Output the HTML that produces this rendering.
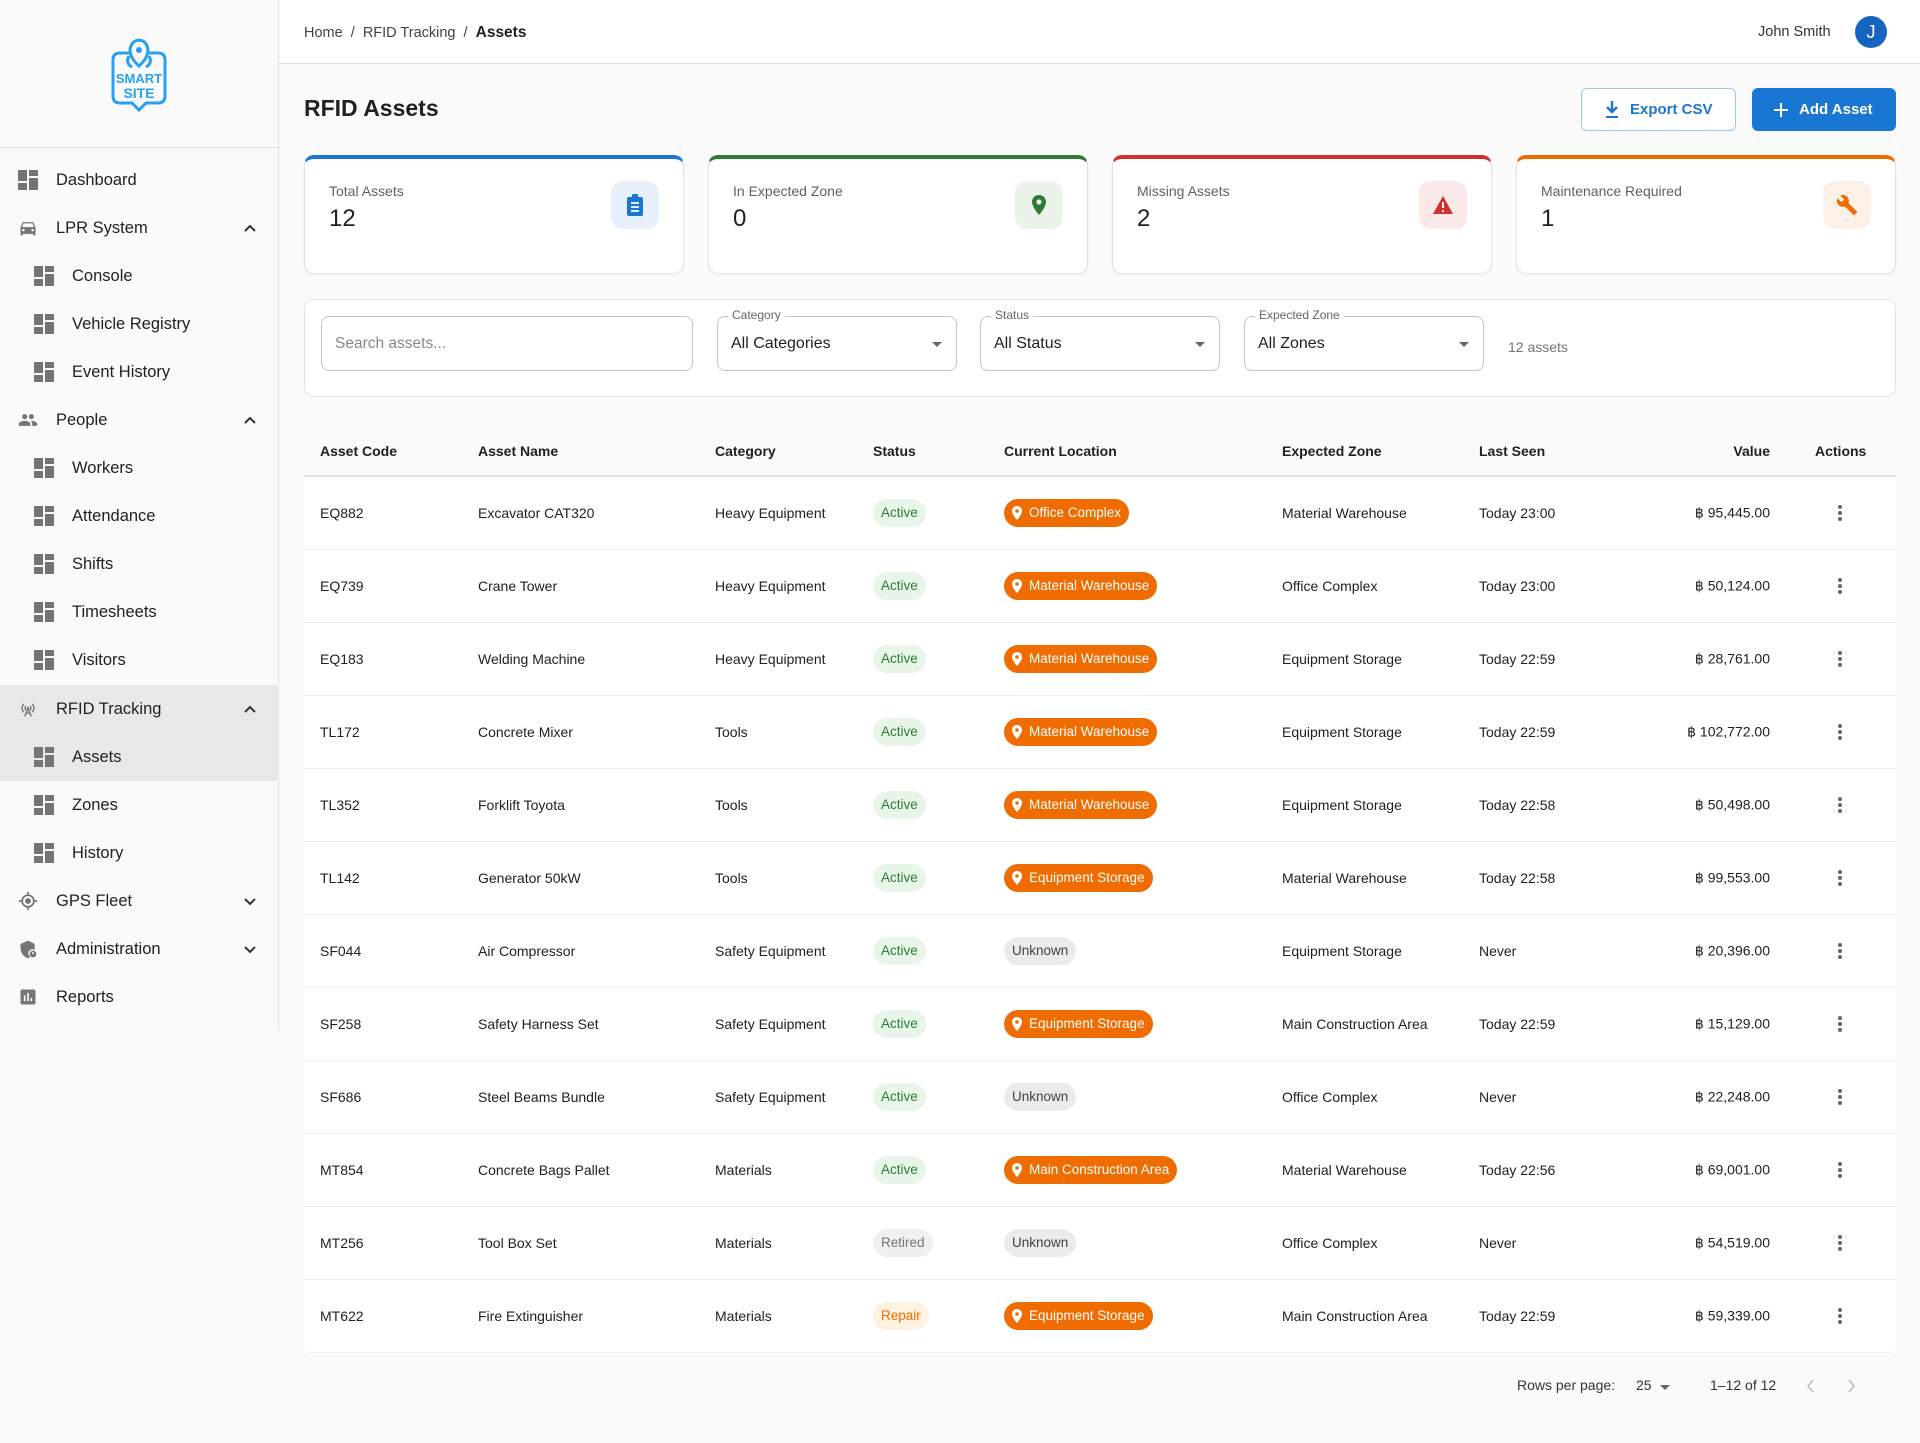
<!DOCTYPE html>
<html><head><meta charset="utf-8"><style>
*{box-sizing:border-box;margin:0;padding:0}
body{width:1920px;height:1443px;background:#fafafa;font-family:"Liberation Sans",Arial,sans-serif;color:#212121;position:relative;overflow:hidden}
.abs{position:absolute}
#side{left:0;top:0;width:279px;height:1030px;border-right:1px solid #e0e0e0;background:#fafafa}
.logoline{position:absolute;left:0;top:147px;width:279px;height:1px;background:#e0e0e0}
.nav{position:absolute;left:0;width:279px;height:48px;display:flex;align-items:center;font-size:16.5px;color:#212121}
.nav.sel{background:#e8e8e8}
.nav .ic{position:absolute;left:18px;top:14px;width:20px;height:20px}
.nav.sub .ic{left:34px}
.nav .t{position:absolute;left:56px}
.nav.sub .t{left:72px}
.nav .ch{position:absolute;left:243px;top:17px}
#top{left:279px;top:0;width:1641px;height:64px;background:#fff;border-bottom:1px solid #e0e0e0}
.card{position:absolute;top:155px;width:380px;height:119px;background:#fff;border-radius:10px;border:1px solid #e3e3e3;border-top:4px solid;box-shadow:0 1px 2px rgba(0,0,0,.05)}
.card .l{position:absolute;left:24px;top:24px;font-size:14px;color:#616161}
.card .v{position:absolute;left:24px;top:46px;font-size:24px;color:#212121}
.card .b{position:absolute;right:24px;top:22px;width:48px;height:48px;border-radius:12px;display:flex;align-items:center;justify-content:center}
.fl{position:absolute;top:316px;height:55px;border:1px solid #c4c4c4;border-radius:8px;background:#fff;font-size:16px}
.fl .lab{position:absolute;left:10px;top:-9px;font-size:12px;color:#666;background:#fff;padding:0 4px}
.fl .val{position:absolute;left:13px;top:18px}
.fl .ar{position:absolute;right:14px;top:25px;width:0;height:0;border-left:5px solid transparent;border-right:5px solid transparent;border-top:5px solid #666}
#tbl{left:304px;top:426px;width:1592px;height:929px;background:#fff;border-radius:10px;overflow:hidden}
.th{position:absolute;top:0;left:0;width:1592px;height:51px;background:#fafafa;border-bottom:2px solid #e0e0e0;font-size:14px;font-weight:bold}
.row{position:absolute;left:0;width:1592px;height:73px;border-bottom:1px solid #f0f0f0;font-size:14px}
.c{position:absolute;top:50%;transform:translateY(-50%);white-space:nowrap}
.chip{height:28px;line-height:28px;border-radius:14px;padding:0 8px;font-size:13.5px}
.act{background:#e8f5e9;color:#2e7d32}
.ret{background:#f0f0f0;color:#757575}
.rep{background:#fff3e0;color:#ef6c00}
.unk{background:#ebebeb;color:#424242}
.loc{background:#ef6c00;color:#fff;padding-left:25px;position:absolute}
.loc svg{position:absolute;left:8px;top:7px}
.dots{width:4px}
.dots i{display:block;width:4px;height:4px;border-radius:2px;background:#666;margin:2px 0}
</style></head><body>
<div id="side" class="abs">
 <svg class="abs" style="left:110px;top:36px" width="58" height="76" viewBox="0 0 58 76">
  <path d="M10 17 H19 M39 17 H48 Q55 17 55 24 V60 Q55 67 48 67 H36 L29 74 L22 67 H10 Q3 67 3 60 V24 Q3 17 10 17" fill="none" stroke="#29a0f0" stroke-width="3"/>
  <path d="M29 30 C20 22 18 14 22 8 C25 3 33 3 36 8 C40 14 38 22 29 30Z" fill="none" stroke="#29a0f0" stroke-width="3"/>
  <circle cx="29" cy="14" r="3" fill="#29a0f0"/>
  <path d="M19 20 Q15 27 22 31 M39 20 Q43 27 36 31" fill="none" stroke="#29a0f0" stroke-width="3"/>
  <text x="29" y="47" text-anchor="middle" font-family="Liberation Sans" font-weight="bold" font-size="13" fill="#29a0f0">SMART</text>
  <text x="29" y="62" text-anchor="middle" font-family="Liberation Sans" font-weight="bold" font-size="14" fill="#29a0f0">SITE</text>
 </svg>
 <div class="logoline"></div>
</div>

<div class="nav" style="top:156px"><svg class="ic" viewBox="0 0 20 20"><path fill="#757575" d="M0 0h9v11H0zM11 0h9v6h-9zM11 8h9v12h-9zM0 13h9v7H0z"/></svg><span class="t">Dashboard</span></div>
<div class="nav" style="top:204px"><svg class="ic" viewBox="0 0 24 24"><path fill="#757575" d="M18.9 6c-.2-.6-.8-1-1.4-1h-11c-.7 0-1.2.4-1.4 1L3 12v8c0 .6.4 1 1 1h1c.6 0 1-.4 1-1v-1h12v1c0 .6.4 1 1 1h1c.6 0 1-.4 1-1v-8zM6.5 16c-.8 0-1.5-.7-1.5-1.5S5.7 13 6.5 13s1.5.7 1.5 1.5S7.3 16 6.5 16m11 0c-.8 0-1.5-.7-1.5-1.5s.7-1.5 1.5-1.5 1.5.7 1.5 1.5-.7 1.5-1.5 1.5M5 11l1.5-4.5h11L19 11z"/></svg><span class="t">LPR System</span><svg class="ch" width="14" height="14" viewBox="0 0 14 14"><path d="M2 10 L7 5 L12 10" fill="none" stroke="#333" stroke-width="2"/></svg></div>
<div class="nav sub" style="top:252px"><svg class="ic" viewBox="0 0 20 20"><path fill="#757575" d="M0 0h9v11H0zM11 0h9v6h-9zM11 8h9v12h-9zM0 13h9v7H0z"/></svg><span class="t">Console</span></div>
<div class="nav sub" style="top:300px"><svg class="ic" viewBox="0 0 20 20"><path fill="#757575" d="M0 0h9v11H0zM11 0h9v6h-9zM11 8h9v12h-9zM0 13h9v7H0z"/></svg><span class="t">Vehicle Registry</span></div>
<div class="nav sub" style="top:348px"><svg class="ic" viewBox="0 0 20 20"><path fill="#757575" d="M0 0h9v11H0zM11 0h9v6h-9zM11 8h9v12h-9zM0 13h9v7H0z"/></svg><span class="t">Event History</span></div>
<div class="nav" style="top:396px"><svg class="ic" viewBox="0 0 24 24"><path fill="#757575" d="M16 11c1.7 0 3-1.3 3-3s-1.3-3-3-3-3 1.3-3 3 1.3 3 3 3m-8 0c1.7 0 3-1.3 3-3S9.7 5 8 5 5 6.3 5 8s1.3 3 3 3m0 2c-2.3 0-7 1.2-7 3.5V19h14v-2.5c0-2.3-4.7-3.5-7-3.5m8 0c-.3 0-.6 0-1 .1 1.2.8 2 2 2 3.4V19h6v-2.5c0-2.3-4.7-3.5-7-3.5"/></svg><span class="t">People</span><svg class="ch" width="14" height="14" viewBox="0 0 14 14"><path d="M2 10 L7 5 L12 10" fill="none" stroke="#333" stroke-width="2"/></svg></div>
<div class="nav sub" style="top:444px"><svg class="ic" viewBox="0 0 20 20"><path fill="#757575" d="M0 0h9v11H0zM11 0h9v6h-9zM11 8h9v12h-9zM0 13h9v7H0z"/></svg><span class="t">Workers</span></div>
<div class="nav sub" style="top:492px"><svg class="ic" viewBox="0 0 20 20"><path fill="#757575" d="M0 0h9v11H0zM11 0h9v6h-9zM11 8h9v12h-9zM0 13h9v7H0z"/></svg><span class="t">Attendance</span></div>
<div class="nav sub" style="top:540px"><svg class="ic" viewBox="0 0 20 20"><path fill="#757575" d="M0 0h9v11H0zM11 0h9v6h-9zM11 8h9v12h-9zM0 13h9v7H0z"/></svg><span class="t">Shifts</span></div>
<div class="nav sub" style="top:588px"><svg class="ic" viewBox="0 0 20 20"><path fill="#757575" d="M0 0h9v11H0zM11 0h9v6h-9zM11 8h9v12h-9zM0 13h9v7H0z"/></svg><span class="t">Timesheets</span></div>
<div class="nav sub" style="top:636px"><svg class="ic" viewBox="0 0 20 20"><path fill="#757575" d="M0 0h9v11H0zM11 0h9v6h-9zM11 8h9v12h-9zM0 13h9v7H0z"/></svg><span class="t">Visitors</span></div>
<div class="nav sel" style="top:685px"><svg class="ic" viewBox="0 0 24 24"><path fill="none" stroke="#757575" stroke-width="1.6" d="M7 6a7 7 0 0 0 0 10M17 6a7 7 0 0 1 0 10M9.5 8.5a3.5 3.5 0 0 0 0 5M14.5 8.5a3.5 3.5 0 0 1 0 5M12 11 L8 21 M12 11 L16 21 M9.5 17h5"/><circle cx="12" cy="11" r="1.5" fill="#757575"/></svg><span class="t">RFID Tracking</span><svg class="ch" width="14" height="14" viewBox="0 0 14 14"><path d="M2 10 L7 5 L12 10" fill="none" stroke="#333" stroke-width="2"/></svg></div>
<div class="nav sub sel" style="top:733px"><svg class="ic" viewBox="0 0 20 20"><path fill="#757575" d="M0 0h9v11H0zM11 0h9v6h-9zM11 8h9v12h-9zM0 13h9v7H0z"/></svg><span class="t">Assets</span></div>
<div class="nav sub" style="top:781px"><svg class="ic" viewBox="0 0 20 20"><path fill="#757575" d="M0 0h9v11H0zM11 0h9v6h-9zM11 8h9v12h-9zM0 13h9v7H0z"/></svg><span class="t">Zones</span></div>
<div class="nav sub" style="top:829px"><svg class="ic" viewBox="0 0 20 20"><path fill="#757575" d="M0 0h9v11H0zM11 0h9v6h-9zM11 8h9v12h-9zM0 13h9v7H0z"/></svg><span class="t">History</span></div>
<div class="nav" style="top:877px"><svg class="ic" viewBox="0 0 24 24"><circle cx="12" cy="12" r="7" fill="none" stroke="#757575" stroke-width="2"/><circle cx="12" cy="12" r="3.5" fill="#757575"/><path d="M12 1v4M12 19v4M1 12h4M19 12h4" stroke="#757575" stroke-width="2"/></svg><span class="t">GPS Fleet</span><svg class="ch" width="14" height="14" viewBox="0 0 14 14"><path d="M2 5 L7 10 L12 5" fill="none" stroke="#333" stroke-width="2"/></svg></div>
<div class="nav" style="top:925px"><svg class="ic" viewBox="0 0 24 24"><path fill="#757575" d="M12 2 L3 6v5c0 5.5 3.8 10.7 9 12 1-.3 2-.7 2.8-1.3A5 5 0 0 1 20 13V6z"/><circle cx="18" cy="18" r="4" fill="#757575"/><circle cx="18" cy="17" r="1.2" fill="#fff"/></svg><span class="t">Administration</span><svg class="ch" width="14" height="14" viewBox="0 0 14 14"><path d="M2 5 L7 10 L12 5" fill="none" stroke="#333" stroke-width="2"/></svg></div>
<div class="nav" style="top:973px"><svg class="ic" viewBox="0 0 24 24"><path fill="#757575" d="M19 3H5c-1.1 0-2 .9-2 2v14c0 1.1.9 2 2 2h14c1.1 0 2-.9 2-2V5c0-1.1-.9-2-2-2M9 17H7v-7h2zm4 0h-2V7h2zm4 0h-2v-4h2z"/></svg><span class="t">Reports</span></div>

<div id="top" class="abs">
 <div class="abs" style="left:25px;top:24px;font-size:14.5px;color:#424242">Home &nbsp;/&nbsp; RFID Tracking &nbsp;/&nbsp; <b style="color:#212121;font-size:15.5px">Assets</b></div>
 <div class="abs" style="left:1479px;top:24px;font-size:14.5px;color:#333">John Smith</div>
 <div class="abs" style="left:1576px;top:16px;width:32px;height:32px;border-radius:16px;background:#1565c0;color:#fff;text-align:center;line-height:32px;font-size:18px">J</div>
</div>

<div class="abs" style="left:304px;top:95px;font-size:23px;font-weight:bold">RFID Assets</div>
<div class="abs" style="left:1581px;top:88px;width:155px;height:43px;border:1px solid #90caf9;border-radius:6px;background:#fff;color:#1976d2;font-size:15px;font-weight:bold;line-height:41px;padding-left:48px">Export CSV
 <svg class="abs" style="left:22px;top:12px" width="16" height="18" viewBox="0 0 16 18"><path d="M8 0v10M3 6l5 5 5-5" fill="none" stroke="#1976d2" stroke-width="2.4"/><path d="M2 16h12" stroke="#1976d2" stroke-width="2"/></svg></div>
<div class="abs" style="left:1752px;top:88px;width:144px;height:43px;border-radius:6px;background:#1976d2;color:#fff;font-size:15px;font-weight:bold;line-height:43px;padding-left:47px">Add Asset
 <svg class="abs" style="left:22px;top:15px" width="14" height="14" viewBox="0 0 14 14"><path d="M7 0v14M0 7h14" stroke="#fff" stroke-width="2"/></svg></div>

<div class="card" style="left:304px;border-top-color:#1976d2"><div class="l">Total Assets</div><div class="v">12</div><div class="b" style="background:#e8f0fb"><svg width="16" height="22" viewBox="0 0 16 22"><rect x="0" y="3" width="16" height="19" rx="2" fill="#1976d2"/><rect x="5" y="0" width="6" height="5" rx="1" fill="#1976d2"/><path d="M4 9h8M4 13h8M4 17h8" stroke="#fff" stroke-width="1.8"/></svg></div></div>
<div class="card" style="left:708px;border-top-color:#2e7d32"><div class="l">In Expected Zone</div><div class="v">0</div><div class="b" style="background:#ebf3ea"><svg width="14" height="20" viewBox="0 0 14 20"><path d="M7 0C3 0 0 3 0 7c0 5 7 13 7 13s7-8 7-13c0-4-3-7-7-7z" fill="#2e7d32"/><circle cx="7" cy="7" r="2.5" fill="#fff"/></svg></div></div>
<div class="card" style="left:1112px;border-top-color:#d32f2f"><div class="l">Missing Assets</div><div class="v">2</div><div class="b" style="background:#fbe9e9"><svg width="20" height="18" viewBox="0 0 20 18"><path d="M10 0L20 18H0z" fill="#d32f2f"/><path d="M10 6v6M10 14v2" stroke="#fff" stroke-width="2"/></svg></div></div>
<div class="card" style="left:1516px;border-top-color:#ef6c00"><div class="l">Maintenance Required</div><div class="v">1</div><div class="b" style="background:#fdf0e6"><svg width="22" height="22" viewBox="0 0 24 24"><path fill="#ef6c00" d="M22.7 19l-9.1-9.1c.9-2.3.4-5-1.5-6.9-2-2-5-2.4-7.4-1.3L9 6 6 9 1.6 4.7C.4 7.1.9 10.1 2.9 12.1c1.9 1.9 4.6 2.4 6.9 1.5l9.1 9.1c.4.4 1 .4 1.4 0l2.3-2.3c.5-.4.5-1.1.1-1.4"/></svg></div></div>

<div class="abs" style="left:304px;top:299px;width:1592px;height:98px;background:#fff;border:1px solid #e3e3e3;border-radius:10px"></div>
<div class="fl" style="left:321px;width:372px"><span class="val" style="color:#888;font-size:15.5px">Search assets...</span></div>
<div class="fl" style="left:717px;width:240px"><span class="lab">Category</span><span class="val">All Categories</span><span class="ar"></span></div>
<div class="fl" style="left:980px;width:240px"><span class="lab">Status</span><span class="val">All Status</span><span class="ar"></span></div>
<div class="fl" style="left:1244px;width:240px"><span class="lab">Expected Zone</span><span class="val">All Zones</span><span class="ar"></span></div>
<div class="abs" style="left:1508px;top:339px;font-size:14px;color:#757575">12 assets</div>

<div id="tbl" class="abs">
 <div class="th">
  <span class="c" style="left:16px">Asset Code</span><span class="c" style="left:174px">Asset Name</span><span class="c" style="left:411px">Category</span><span class="c" style="left:569px">Status</span><span class="c" style="left:700px">Current Location</span><span class="c" style="left:978px">Expected Zone</span><span class="c" style="left:1175px">Last Seen</span><span class="c" style="right:126px">Value</span><span class="c" style="left:1511px">Actions</span>
 </div>
</div>
<script>
const rows=[
["EQ882","Excavator CAT320","Heavy Equipment","act","Active","Office Complex","Material Warehouse","Today 23:00","95,445.00"],
["EQ739","Crane Tower","Heavy Equipment","act","Active","Material Warehouse","Office Complex","Today 23:00","50,124.00"],
["EQ183","Welding Machine","Heavy Equipment","act","Active","Material Warehouse","Equipment Storage","Today 22:59","28,761.00"],
["TL172","Concrete Mixer","Tools","act","Active","Material Warehouse","Equipment Storage","Today 22:59","102,772.00"],
["TL352","Forklift Toyota","Tools","act","Active","Material Warehouse","Equipment Storage","Today 22:58","50,498.00"],
["TL142","Generator 50kW","Tools","act","Active","Equipment Storage","Material Warehouse","Today 22:58","99,553.00"],
["SF044","Air Compressor","Safety Equipment","act","Active","","Equipment Storage","Never","20,396.00"],
["SF258","Safety Harness Set","Safety Equipment","act","Active","Equipment Storage","Main Construction Area","Today 22:59","15,129.00"],
["SF686","Steel Beams Bundle","Safety Equipment","act","Active","","Office Complex","Never","22,248.00"],
["MT854","Concrete Bags Pallet","Materials","act","Active","Main Construction Area","Material Warehouse","Today 22:56","69,001.00"],
["MT256","Tool Box Set","Materials","ret","Retired","","Office Complex","Never","54,519.00"],
["MT622","Fire Extinguisher","Materials","rep","Repair","Equipment Storage","Main Construction Area","Today 22:59","59,339.00"]];
let h="";
rows.forEach((r,i)=>{
 const loc=r[5]?`<span class="c chip loc" style="left:700px"><svg width="10" height="14" viewBox="0 0 10 14"><path d="M5 0C2.2 0 0 2.2 0 5c0 3.5 5 9 5 9s5-5.5 5-9c0-2.8-2.2-5-5-5z" fill="#fff"/><circle cx="5" cy="5" r="1.8" fill="#ef6c00"/></svg>${r[5]}</span>`:`<span class="c chip unk" style="left:700px">Unknown</span>`;
 h+=`<div class="row" style="top:${51+i*73}px"><span class="c" style="left:16px">${r[0]}</span><span class="c" style="left:174px">${r[1]}</span><span class="c" style="left:411px">${r[2]}</span><span class="c chip ${r[3]}" style="left:569px">${r[4]}</span>${loc}<span class="c" style="left:978px">${r[6]}</span><span class="c" style="left:1175px">${r[7]}</span><span class="c" style="right:126px">฿ ${r[8]}</span><span class="c dots" style="left:1534px"><i></i><i></i><i></i></span></div>`;
});
document.getElementById('tbl').insertAdjacentHTML('beforeend',h);
</script>
<div class="abs" style="left:1517px;top:1377px;font-size:14px;color:#333">Rows per page:</div>
<div class="abs" style="left:1636px;top:1377px;font-size:14px;color:#333">25</div>
<div class="abs" style="left:1660px;top:1385px;width:0;height:0;border-left:5px solid transparent;border-right:5px solid transparent;border-top:5px solid #666"></div>
<div class="abs" style="left:1710px;top:1377px;font-size:14px;color:#333">1–12 of 12</div>
<svg class="abs" style="left:1806px;top:1378px" width="10" height="16" viewBox="0 0 10 16"><path d="M7 2L2 8l5 6" fill="none" stroke="#bbb" stroke-width="1.6"/></svg>
<svg class="abs" style="left:1846px;top:1378px" width="10" height="16" viewBox="0 0 10 16"><path d="M3 2l5 6-5 6" fill="none" stroke="#bbb" stroke-width="1.6"/></svg>
</body></html>
